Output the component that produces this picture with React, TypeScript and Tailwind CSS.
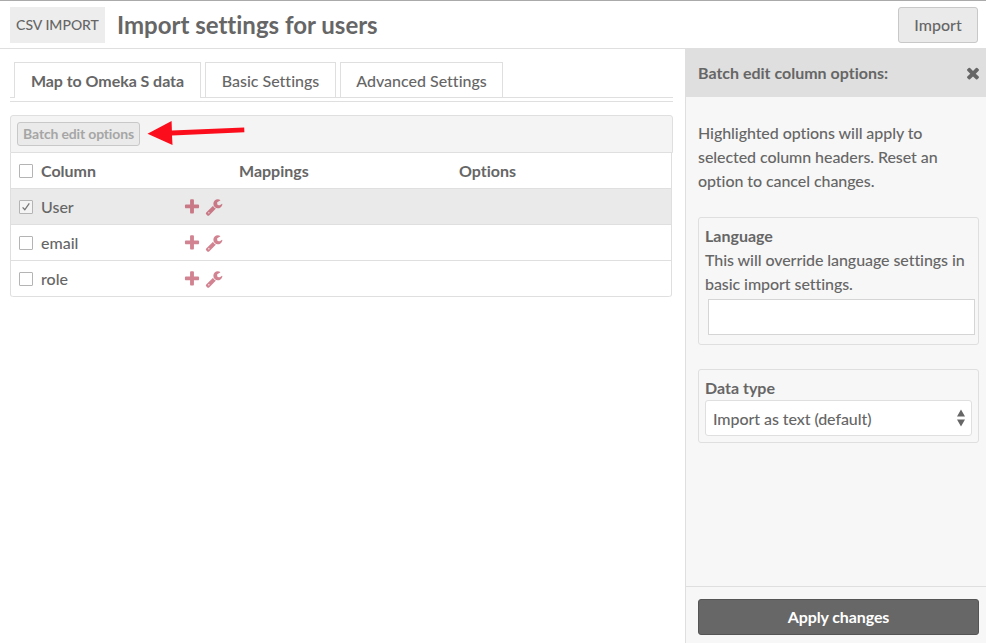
type IconProps = { className?: string };

const PLUS =
  "M1600 736v192q0 40-28 68t-68 28h-416v416q0 40-28 68t-68 28h-192q-40 0-68-28t-28-68v-416h-416q-40 0-68-28t-28-68v-192q0-40 28-68t68-28h416v-416q0-40 28-68t68-28h192q40 0 68 28t28 68v416h416q40 0 68 28t28 68z";
const WRENCH =
  "M448 1472q0-26-19-45t-45-19-45 19-19 45 19 45 45 19 45-19 19-45zm644-420l-682 682q-37 37-90 37-52 0-91-37l-106-108q-38-36-38-90 0-53 38-91l681-681q39 98 114.500 173.500t173.500 114.500zm634-435q0 39-23 106-47 134-164.500 217.500t-258.500 83.500q-185 0-316.500-131.500t-131.500-316.500 131.500-316.500 316.500-131.500q58 0 121.500 16.500t107.500 46.500q16 11 16 28t-16 28l-293 169v224l193 107q5-3 79-48.500t135.500-81 70.500-35.500q15 0 23.500 10t8.500 25z";
const TIMES =
  "M1490 1322q0 40-28 68l-136 136q-28 28-68 28t-68-28l-294-294-294 294q-28 28-68 28t-68-28l-136-136q-28-28-28-68t28-68l294-294-294-294q-28-28-28-68t28-68l136-136q28-28 68-28t68 28l294 294 294-294q28-28 68-28t68 28l136 136q28 28 28 68t-28 68l-294 294 294 294q28 28 28 68z";

function Icon({ d, className }: IconProps & { d: string }) {
  return (
    <svg viewBox="0 0 1792 1792" fill="currentColor" className={className}>
      <path d={d} />
    </svg>
  );
}

function Checkbox({ checked = false }: { checked?: boolean }) {
  return (
    <span
      className={`mt-px flex h-3.5 w-3.5 shrink-0 items-center justify-center rounded-[1px] border border-[#b4b4b4] ${checked ? "bg-[#f4f4f4]" : "bg-white"}`}
    >
      {checked && (
        <svg viewBox="0 0 12 12" className="h-3 w-3 shrink-0" fill="none" stroke="#757575" strokeWidth="1.3">
          <path d="M2.6 6.4l2.2 2.4L9.3 2.3" />
        </svg>
      )}
    </span>
  );
}

function Row({ name, checked = false }: { name: string; checked?: boolean }) {
  return (
    <div className={`flex h-9 items-center border-b border-[#dfdfdf] pl-2 last:rounded-b-[3px] ${checked ? "bg-[#eaeaea]" : ""}`}>
      <Checkbox checked={checked} />
      <span className="ml-2 w-[142px] pt-px">{name}</span>
      <span className={`flex items-center gap-1 pt-px ${checked ? "text-[#c97986]" : "text-[#d28391]"}`}>
        <Icon d={PLUS} className="h-[18px] w-[18px]" />
        <Icon d={WRENCH} className="h-[18px] w-[18px]" />
      </span>
    </div>
  );
}

export default function App() {
  return (
    <div className="flex h-[643px] w-[986px] flex-col overflow-hidden border-t border-[#aaaaaa] bg-white font-['Lato',sans-serif] text-base leading-6 font-medium text-[#666666] [font-variant-ligatures:none]">
      <header className="flex h-12 shrink-0 items-start border-b border-[#dfdfdf] pt-1.5 pr-2 pl-2.5">
        <div className="flex h-9 w-[95px] items-center justify-center bg-[#ededed] text-sm whitespace-nowrap">CSV IMPORT</div>
        <h1 className="ml-3 text-2xl leading-9 font-bold whitespace-nowrap">Import settings for users</h1>
        <button className="ml-auto h-9 w-20 rounded-[3px] border border-[#c8c8c8] bg-[#eaeaea]">Import</button>
      </header>

      <div className="flex min-h-0 flex-1">
        <main className="w-[685px] pt-[13px] pl-2.5">
          <nav className="flex h-9 w-[663px] whitespace-nowrap">
            <span className="w-1 border-b border-[#dfdfdf]" />
            <a className="flex w-[187px] items-center justify-center border border-b-0 border-[#dfdfdf] pt-px font-bold tracking-[-0.05px]">Map to Omeka S data</a>
            <span className="w-1 border-b border-[#dfdfdf]" />
            <a className="flex w-[131px] items-center justify-center border border-[#dfdfdf] pt-0.5">Basic Settings</a>
            <span className="w-1 border-b border-[#dfdfdf]" />
            <a className="flex w-[163px] items-center justify-center border border-[#dfdfdf] pt-0.5">Advanced Settings</a>
            <span className="flex-1 border-b border-[#dfdfdf]" />
          </nav>
          <div className="mt-[3px] h-px w-[663px] bg-[#dfdfdf]" />

          <section className="mt-[13px] w-[663px]">
            <div className="flex h-[38px] items-start rounded-t-[3px] border border-[#dfdfdf] bg-[#f4f4f4] pt-1.5 pl-1.5">
              <button className="h-6 w-[123px] rounded-[3px] border border-[#c8c8c8] bg-[#eaeaea] text-sm leading-[22px] font-bold tracking-[-0.16px] whitespace-nowrap text-[#a6a6a6]">
                Batch edit options
              </button>
              <svg viewBox="0 0 98 30" className="-mt-1.5 ml-[7px] h-[30px] w-[98px] self-start" fill="#fc0d1b">
                <path d="M0.500 17.700L24.600 5L24.900 14.600L97.200 11.400L97.400 16.200L25 19.500L25.500 29Z" />
              </svg>
            </div>
            <div className="w-[662px] rounded-b-[3px] border-x border-[#dfdfdf]">
              <div className="flex h-9 items-center border-b border-[#dfdfdf] pl-2 font-bold">
                <Checkbox />
                <span className="ml-2 w-[198px]">Column</span>
                <span className="w-[220px]">Mappings</span>
                <span>Options</span>
              </div>
              <Row name="User" checked />
              <Row name="email" />
              <Row name="role" />
            </div>
          </section>
        </main>

        <aside className="flex w-[301px] flex-col border-l border-[#dfdfdf] bg-[#f7f7f7]">
          <div className="flex h-12 shrink-0 items-center justify-between bg-[#dfdfdf] pr-1 pl-3 font-bold">
            <span>Batch edit column options:</span>
            <Icon d={TIMES} className="h-[18px] w-[18px]" />
          </div>
          <div className="flex-1 pt-6 pr-[7px] pl-3 tracking-[-0.07px]">
            <p className="w-[270px]">Highlighted options will apply to selected column headers. Reset an option to cancel changes.</p>
            <div className="mt-6 h-32 rounded-[3px] border border-[#dfdfdf] px-1.5 pt-1.5">
              <div className="font-bold tracking-normal">Language</div>
              <p className="whitespace-nowrap">
                This will override language settings in
                <br />
                basic import settings.
              </p>
              <div className="mt-[3px] ml-[3px] h-9 w-[267px] border border-[#d5d5d5] bg-white" />
            </div>
            <div className="mt-6 h-[74px] rounded-[3px] border border-[#dfdfdf] px-1.5 pt-1.5">
              <div className="font-bold tracking-normal">Data type</div>
              <div className="flex h-9 w-[267px] items-center justify-between rounded-[3px] border border-[#dfdfdf] bg-white pr-1.5 pl-[7px]">
                <span className="pt-0.5">Import as text (default)</span>
                <svg viewBox="0 0 8 18" className="h-[18px] w-2" fill="#666666">
                  <path d="M4 0.500L8 7.500H0ZM0 10.500H8L4 17.500Z" />
                </svg>
              </div>
            </div>
          </div>
          <footer className="h-[57px] shrink-0 border-t border-[#dfdfdf] pt-3 pr-[7px] pl-3">
            <button className="h-9 w-full rounded-[3px] border border-[#555555] bg-[#676767] font-bold tracking-[-0.1px] text-white">Apply changes</button>
          </footer>
        </aside>
      </div>
    </div>
  );
}
